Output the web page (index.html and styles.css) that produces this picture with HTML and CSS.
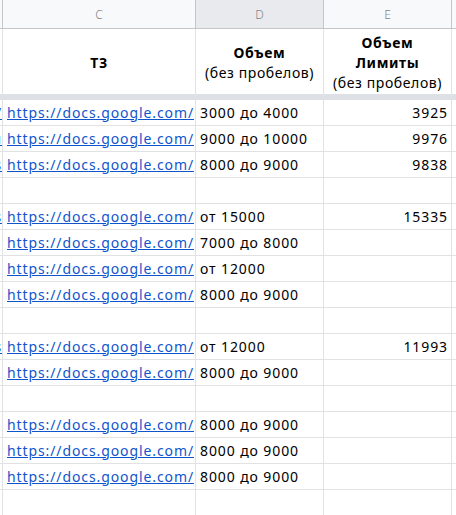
FILE: index.html
```html
<!DOCTYPE html>
<html lang="ru">
<head>
<meta charset="utf-8">
<link rel="stylesheet" href="styles.css">
</head>
<body>
<div class="sheet">
  <div class="colhead stub"></div>
  <div class="colhead">C</div>
  <div class="colhead selected">D</div>
  <div class="colhead">E</div>
  <div class="colhead tail"></div>

  <div class="cell stub titlerow"></div>
  <div class="cell title titlerow"><div class="tw"><b>ТЗ</b></div></div>
  <div class="cell title titlerow"><div class="tw"><b>Объем</b><br>(без пробелов)</div></div>
  <div class="cell title titlerow"><div class="tw"><b>Объем<br>Лимиты</b><br>(без пробелов)</div></div>
  <div class="cell tail titlerow"></div>
</div>
<div class="sheet data">
  <div class="cell stub"><span class="spill">m/</span></div><div class="cell"><a href="#">https://docs.google.com/</a></div><div class="cell">3000 до 4000</div><div class="cell num">3925</div><div class="cell tail"></div>
  <div class="cell stub"><span class="spill">u</span></div><div class="cell"><a href="#">https://docs.google.com/</a></div><div class="cell">9000 до 10000</div><div class="cell num">9976</div><div class="cell tail"></div>
  <div class="cell stub"><span class="spill">s</span></div><div class="cell"><a href="#">https://docs.google.com/</a></div><div class="cell">8000 до 9000</div><div class="cell num">9838</div><div class="cell tail"></div>
  <div class="cell stub"></div><div class="cell"></div><div class="cell"></div><div class="cell num"></div><div class="cell tail"></div>
  <div class="cell stub"><span class="spill">s</span></div><div class="cell"><a href="#">https://docs.google.com/</a></div><div class="cell">от 15000</div><div class="cell num">15335</div><div class="cell tail"></div>
  <div class="cell stub"></div><div class="cell"><a href="#">https://docs.google.com/</a></div><div class="cell">7000 до 8000</div><div class="cell num"></div><div class="cell tail"></div>
  <div class="cell stub"></div><div class="cell"><a href="#">https://docs.google.com/</a></div><div class="cell">от 12000</div><div class="cell num"></div><div class="cell tail"></div>
  <div class="cell stub"></div><div class="cell"><a href="#">https://docs.google.com/</a></div><div class="cell">8000 до 9000</div><div class="cell num"></div><div class="cell tail"></div>
  <div class="cell stub"></div><div class="cell"></div><div class="cell"></div><div class="cell num"></div><div class="cell tail"></div>
  <div class="cell stub"><span class="spill">s</span></div><div class="cell"><a href="#">https://docs.google.com/</a></div><div class="cell">от 12000</div><div class="cell num">11993</div><div class="cell tail"></div>
  <div class="cell stub"></div><div class="cell"><a href="#">https://docs.google.com/</a></div><div class="cell">8000 до 9000</div><div class="cell num"></div><div class="cell tail"></div>
  <div class="cell stub"></div><div class="cell"></div><div class="cell"></div><div class="cell num"></div><div class="cell tail"></div>
  <div class="cell stub"></div><div class="cell"><a href="#">https://docs.google.com/</a></div><div class="cell">8000 до 9000</div><div class="cell num"></div><div class="cell tail"></div>
  <div class="cell stub"></div><div class="cell"><a href="#">https://docs.google.com/</a></div><div class="cell">8000 до 9000</div><div class="cell num"></div><div class="cell tail"></div>
  <div class="cell stub"></div><div class="cell"><a href="#">https://docs.google.com/</a></div><div class="cell">8000 до 9000</div><div class="cell num"></div><div class="cell tail"></div>
  <div class="cell stub"></div><div class="cell"></div><div class="cell"></div><div class="cell num"></div><div class="cell tail"></div>
</div>
</body>
</html>
```

FILE: styles.css
```css
* { box-sizing: border-box; }
html, body {
  margin: 0;
  padding: 0;
  background: #ffffff;
  overflow: hidden;
}
body {
  font-family: "Noto Sans", "Open Sans", sans-serif;
  font-size: 14px;
  letter-spacing: 0.9px;
  color: #000;
}
.sheet {
  display: grid;
  grid-template-columns: 3px 193px 128px 128px 4px;
}
.colhead {
  height: 29px;
  background: #f8f9fa;
  border-right: 1px solid #c4c7c5;
  border-bottom: 1px solid #c4c7c5;
  color: #80868b;
  font-family: "Noto Sans", "Liberation Sans", sans-serif;
  font-size: 12px;
  font-weight: 300;
  letter-spacing: 0;
  display: flex;
  align-items: center;
  justify-content: center;
}
.colhead.selected { background: #e8eaed; }
.colhead.tail { border-right: none; }
.cell {
  height: 26px;
  border-right: 1px solid #e2e2e2;
  border-bottom: 1px solid #e2e2e2;
  padding: 0 3px 0 4px;
  white-space: nowrap;
  overflow: hidden;
  display: flex;
  align-items: center;
  line-height: 1;
}
.cell.tail { border-right: none; padding: 0; }
.cell.stub { padding: 0; justify-content: flex-end; }
.spill {
  color: #1155cc;
  text-decoration: underline;
}
.titlerow {
  height: 71px;
  border-bottom: 6px solid #dde0e5;
}
.cell.title {
  justify-content: center;
  padding: 2px 0 0 0;
  letter-spacing: 0.6px;
}
.tw {
  text-align: center;
  line-height: 20px;
}
a {
  color: #1155cc;
  text-decoration: underline;
}
.num { justify-content: flex-end; }
```
